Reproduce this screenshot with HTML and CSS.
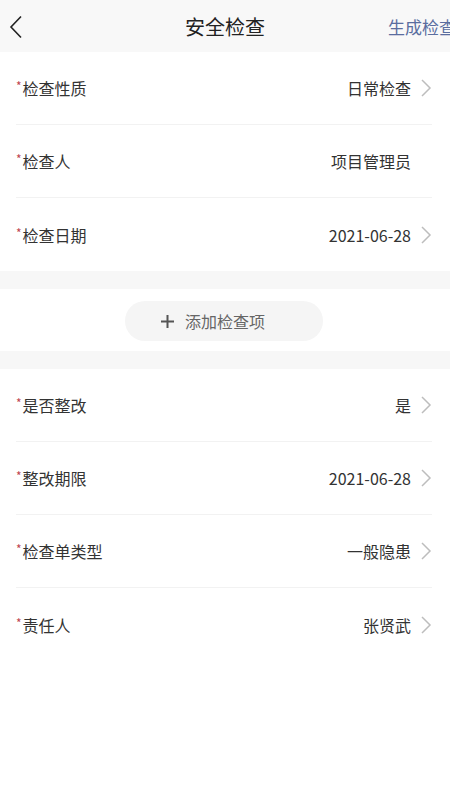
FILE: index.html
```html
<!DOCTYPE html>
<html lang="zh-CN">
<head>
    <meta charset="UTF-8">
    <meta name="viewport" content="width=device-width, initial-scale=1.0">
    <title>安全检查</title>
    <link rel="stylesheet" href="styles.css">
</head>
<body>
    <header class="nav">
        <div class="nav-left">
            <svg class="back" width="14" height="24" viewBox="0 0 14 24"><path d="M12 1.5 L2 12 L12 22.5" fill="none" stroke="#222" stroke-width="1.6"/></svg>
        </div>
        <h1 class="nav-title">安全检查</h1>
        <div class="nav-right">生成检查单</div>
    </header>

    <section class="group">
        <div class="row">
            <span class="label"><i class="req">*</i>检查性质</span>
            <span class="value">日常检查</span>
            <svg class="arrow" width="12" height="18" viewBox="0 0 12 18"><path d="M2 1 L10 9 L2 17" fill="none" stroke="#bdbdbd" stroke-width="1.5"/></svg>
        </div>
        <div class="row">
            <span class="label"><i class="req">*</i>检查人</span>
            <span class="value">项目管理员</span>
            <svg class="arrow hidden" width="12" height="18" viewBox="0 0 12 18"><path d="M2 1 L10 9 L2 17" fill="none" stroke="#bdbdbd" stroke-width="1.5"/></svg>
        </div>
        <div class="row last">
            <span class="label"><i class="req">*</i>检查日期</span>
            <span class="value">2021-06-28</span>
            <svg class="arrow" width="12" height="18" viewBox="0 0 12 18"><path d="M2 1 L10 9 L2 17" fill="none" stroke="#bdbdbd" stroke-width="1.5"/></svg>
        </div>
    </section>

    <section class="group add-box">
        <button class="add-btn">
            <svg class="plus" width="13" height="13" viewBox="0 0 13 13"><path d="M6.5 0 V13 M0 6.5 H13" stroke="#555" stroke-width="2"/></svg>
            添加检查项
        </button>
    </section>

    <section class="group">
        <div class="row">
            <span class="label"><i class="req">*</i>是否整改</span>
            <span class="value">是</span>
            <svg class="arrow" width="12" height="18" viewBox="0 0 12 18"><path d="M2 1 L10 9 L2 17" fill="none" stroke="#bdbdbd" stroke-width="1.5"/></svg>
        </div>
        <div class="row">
            <span class="label"><i class="req">*</i>整改期限</span>
            <span class="value">2021-06-28</span>
            <svg class="arrow" width="12" height="18" viewBox="0 0 12 18"><path d="M2 1 L10 9 L2 17" fill="none" stroke="#bdbdbd" stroke-width="1.5"/></svg>
        </div>
        <div class="row">
            <span class="label"><i class="req">*</i>检查单类型</span>
            <span class="value">一般隐患</span>
            <svg class="arrow" width="12" height="18" viewBox="0 0 12 18"><path d="M2 1 L10 9 L2 17" fill="none" stroke="#bdbdbd" stroke-width="1.5"/></svg>
        </div>
        <div class="row last">
            <span class="label"><i class="req">*</i>责任人</span>
            <span class="value">张贤武</span>
            <svg class="arrow" width="12" height="18" viewBox="0 0 12 18"><path d="M2 1 L10 9 L2 17" fill="none" stroke="#bdbdbd" stroke-width="1.5"/></svg>
        </div>
    </section>
</body>
</html>
```
FILE: styles.css
```css
html, body {
    margin: 0;
    padding: 0;
}
body {
    font-family: "Noto Sans CJK SC", "Noto Sans", sans-serif;
    color: #333;
    background-color: #fff;
    width: 450px;
    min-height: 800px;
    overflow: hidden;
}
.nav {
    height: 52px;
    background-color: #f8f8f8;
    display: grid;
    grid-template-columns: 80px 1fr 62px;
    align-items: center;
    overflow: hidden;
}
.nav-left {
    padding-left: 9px;
    display: flex;
    align-items: center;
    padding-top: 1px;
}
.nav-title {
    margin: 0;
    text-align: center;
    font-size: 20px;
    font-weight: normal;
    color: #222;
    padding-right: 18px;
}
.nav-right {
    font-size: 17px;
    color: #5a6d9f;
    white-space: nowrap;
}
.group {
    background-color: #fff;
    border-bottom: 18px solid #f7f7f7;
}
.row {
    height: 73px;
    margin: 0 18px 0 16px;
    display: flex;
    align-items: center;
    border-bottom: 1px solid #f2f2f2;
    box-sizing: border-box;
    font-size: 16px;
}
.row.last {
    border-bottom: none;
}
.label {
    flex: 1;
    display: flex;
    align-items: flex-start;
}
.req {
    font-style: normal;
    color: #c0454f;
    font-size: 12px;
    line-height: 1;
    margin-right: 1px;
    margin-top: 4px;
}
.value {
    color: #333;
}
.arrow {
    margin-left: 9px;
}
.arrow.hidden {
    visibility: hidden;
}
.add-box {
    height: 62px;
    display: flex;
    align-items: center;
    justify-content: center;
}
.add-btn {
    width: 198px;
    height: 40px;
    border: none;
    border-radius: 20px;
    background-color: #f5f5f5;
    color: #666;
    font-family: inherit;
    font-size: 16px;
    display: flex;
    align-items: center;
    justify-content: center;
    padding: 0 22px 0 0;
    margin-right: 2px;
    margin-top: 2px;
}
.plus {
    margin-right: 11px;
}
.group:last-child {
    border-bottom: none;
}
```
